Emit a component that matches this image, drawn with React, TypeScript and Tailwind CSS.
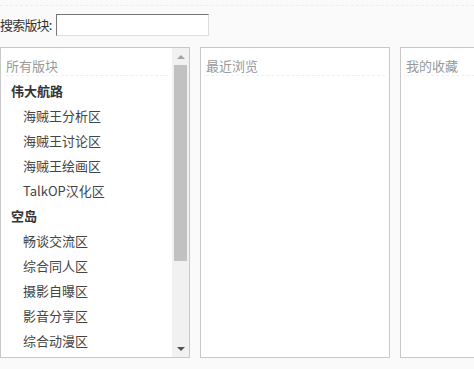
import React from 'react';

const groups = [
  { name: '伟大航路', items: ['海贼王分析区', '海贼王讨论区', '海贼王绘画区', 'TalkOP汉化区'] },
  { name: '空岛', items: ['畅谈交流区', '综合同人区', '摄影自曝区', '影音分享区', '综合动漫区'] },
];

const Panel = ({ title, children, scroll }: { title: string; children?: React.ReactNode; scroll?: boolean }) => (
  <div className="w-[190px] h-[311px] shrink-0 border border-[#c8c8c8] bg-white flex overflow-hidden">
    <div className="flex-1 min-w-0 pl-[5px] pr-[4px] pt-[8px] overflow-hidden">
      <div className="h-[20px] leading-[20px] text-[13px] text-[#999] border-b border-dashed border-[#eee] mb-[2px]">{title}</div>
      {children}
    </div>
    {scroll && (
      <div className="w-[17px] shrink-0 bg-[#f1f1f1] flex flex-col items-center">
        <div className="h-[17px] flex items-center justify-center">
          <div className="w-0 h-0 border-x-[4px] border-x-transparent border-b-[4px] border-b-[#a3a3a3]" />
        </div>
        <div className="w-[13px] h-[196px] bg-[#c1c1c1]" />
        <div className="flex-1" />
        <div className="h-[17px] flex items-center justify-center">
          <div className="w-0 h-0 border-x-[4px] border-x-transparent border-t-[4px] border-t-[#505050]" />
        </div>
      </div>
    )}
  </div>
);

export default function App() {
  return (
    <div
      className="w-[474px] h-[369px] bg-[#fafafa] overflow-hidden text-[#333]"
      style={{ fontFamily: '"Noto Sans CJK SC", "Noto Sans", sans-serif' }}
    >
      <div className="h-[6px] border-b border-dashed border-[#eee]" />
      <div className="flex items-center h-[30px] mt-[4px]">
        <span className="text-[13px] leading-[22px] tracking-[-0.8px] mr-[4px]">搜索版块:</span>
        <input
          className="w-[153px] h-[22px] bg-white border border-t-[#767676] border-l-[#767676] border-r-[#ddd] border-b-[#ddd] outline-none"
          type="text"
        />
      </div>
      <div className="flex gap-[10px] mt-[7px]">
        <Panel title="所有版块" scroll>
          {groups.map(g => (
            <div key={g.name}>
              <div className="h-[25px] leading-[25px] pl-[5px] text-[13px] font-semibold text-[#333]">{g.name}</div>
              {g.items.map(i => (
                <div key={i} className="h-[25px] leading-[25px] pl-[17px] text-[13px] text-[#444]">{i}</div>
              ))}
            </div>
          ))}
        </Panel>
        <Panel title="最近浏览" />
        <Panel title="我的收藏" />
      </div>
    </div>
  );
}
